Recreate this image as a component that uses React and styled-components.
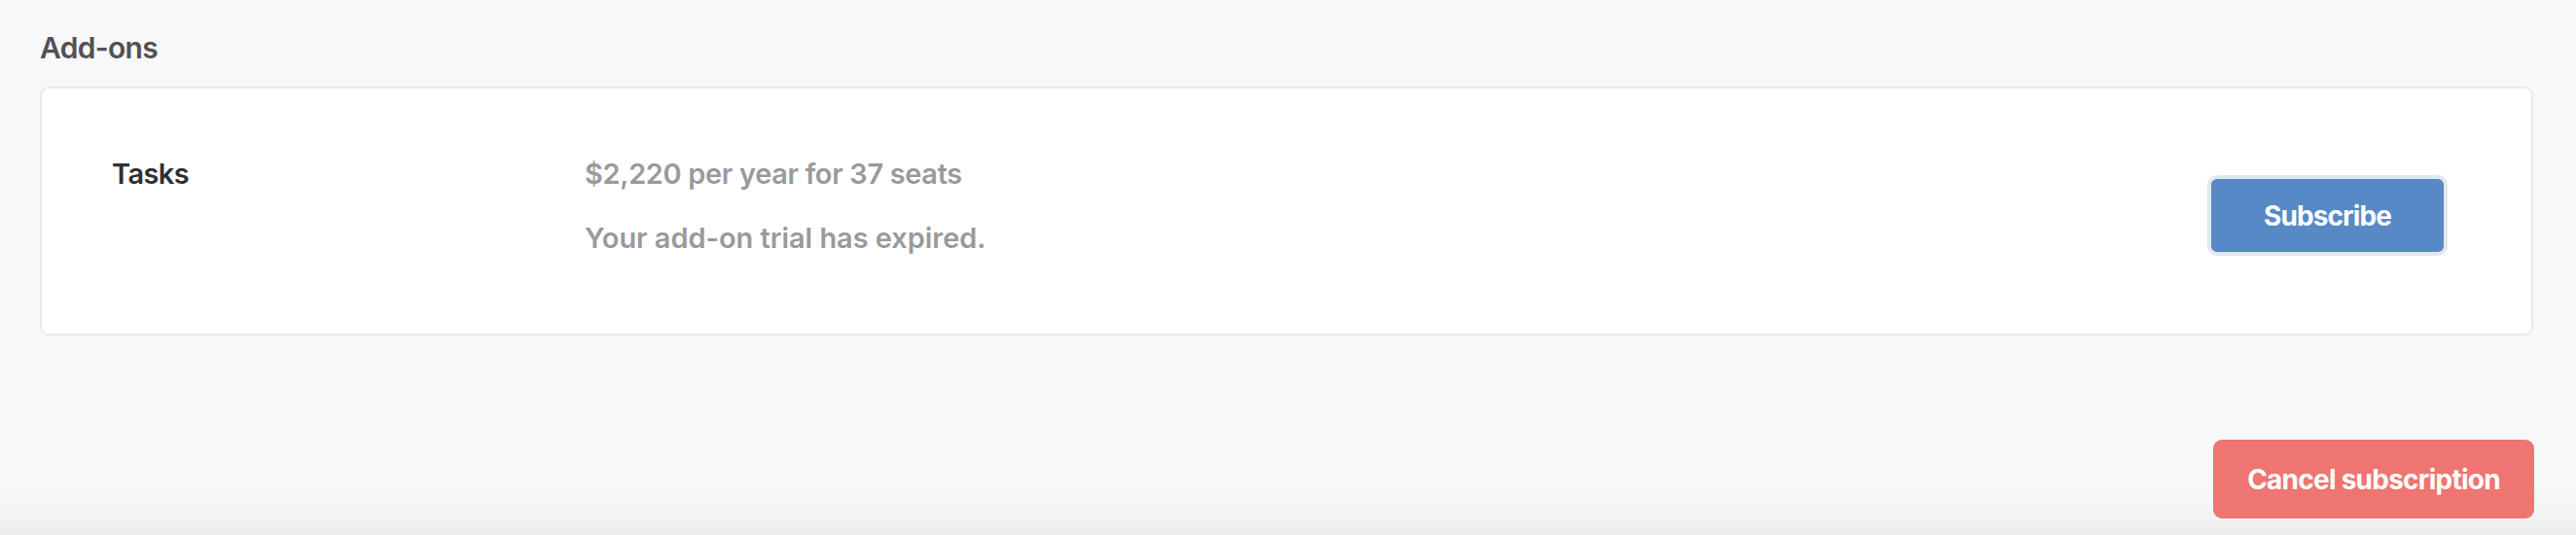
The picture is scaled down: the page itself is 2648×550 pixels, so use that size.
import React from "react";
import styled, { createGlobalStyle } from "styled-components";

const GlobalStyle = createGlobalStyle`
  html, body {
    margin: 0;
    padding: 0;
  }
  body {
    font-family: Inter, "Noto Sans", sans-serif;
    -webkit-font-smoothing: antialiased;
  }
`;

const Page = styled.div`
  box-sizing: border-box;
  height: 550px;
  padding: 31px 44px 0 41px;
  background: linear-gradient(
    to bottom,
    #f7f8fa 0,
    #f7f8fa 500px,
    #f3f4f6 530px,
    #eaebed 550px
  );
  overflow: hidden;
`;

const Heading = styled.h2`
  margin: 0 0 22px;
  font-size: 30px;
  line-height: 36px;
  font-weight: 600;
  color: #564f4f;
  letter-spacing: -0.7px;
`;

const Card = styled.div`
  box-sizing: border-box;
  height: 256px;
  display: flex;
  align-items: flex-start;
  padding: 68px 86px 0 72px;
  background: #fff;
  border: 2px solid #e9eaeb;
  border-radius: 9px;
`;

const Name = styled.div`
  width: 486px;
  flex-shrink: 0;
  font-size: 29px;
  line-height: 40px;
  font-weight: 600;
  color: #2f2f2f;
  letter-spacing: -0.6px;
`;

const Details = styled.div`
  flex: 1;
`;

const Line = styled.p`
  margin: 0 0 26px;
  font-size: 29px;
  line-height: 40px;
  font-weight: 600;
  color: #9a9a9a;
  letter-spacing: ${(p) => p.$spacing || "-0.2px"};
  &:last-child {
    margin-bottom: 0;
  }
`;

const Button = styled.button`
  box-sizing: border-box;
  font-family: inherit;
  font-weight: 700;
  font-size: 28px;
  letter-spacing: -0.8px;
  color: #fff;
  cursor: pointer;
  background: ${(p) => p.$bg};
`;

const SubscribeButton = styled(Button)`
  margin-top: 21px;
  width: 247px;
  height: 83px;
  border: 4px solid #e3e8ee;
  border-radius: 10px;
  letter-spacing: -0.9px;
`;

const Footer = styled.div`
  display: flex;
  justify-content: flex-end;
  margin-top: 107px;
  margin-right: -1px;
`;

const CancelButton = styled(Button)`
  width: 330px;
  height: 81px;
  border: none;
  border-radius: 9px;
  letter-spacing: -0.75px;
`;

export default function App() {
  return (
    <>
      <GlobalStyle />
      <Page>
        <Heading>Add-ons</Heading>
        <Card>
          <Name>Tasks</Name>
          <Details>
            <Line $spacing="-0.35px">$2,220 per year for 37 seats</Line>
            <Line $spacing="-0.05px">Your add-on trial has expired.</Line>
          </Details>
          <SubscribeButton $bg="#5689c6">Subscribe</SubscribeButton>
        </Card>
        <Footer>
          <CancelButton $bg="#ee7571">Cancel subscription</CancelButton>
        </Footer>
      </Page>
    </>
  );
}
